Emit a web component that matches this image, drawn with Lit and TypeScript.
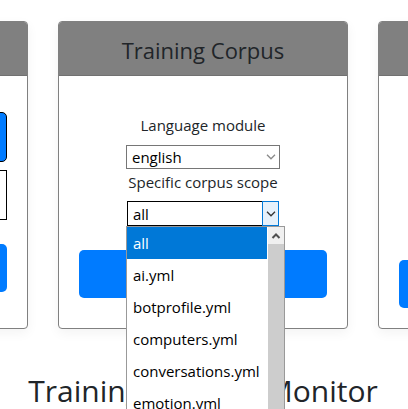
import { LitElement, html, css, svg } from "lit";
import { customElement, property, state } from "lit/decorators.js";
import { classMap } from "lit/directives/class-map.js";

const chevron = (up = false) => html`<svg class="chevron" width="10" height="6" viewBox="0 0 10 6" fill="none" stroke="currentColor" aria-hidden="true">
  ${up ? svg`<path stroke-width="2" d="M1.5 5 L5 1.5 L8.5 5"/>` : svg`<path stroke-width="1.3" d="M1 0.8 L5 4.8 L9 0.8"/>`}
</svg>`;

@customElement("deck-card")
export class DeckCard extends LitElement {
  @property() heading = "";

  static styles = css`
    :host {
      display: flex;
      flex-direction: column;
      box-sizing: border-box;
      border: 1px solid #808080;
      border-radius: 4px;
      background: #fff;
      box-shadow: 0 4px 12px rgba(0, 0, 0, 0.05);
    }
    .header {
      padding: 14px 20px 10px;
      background: #808080;
      border-bottom: 1px solid #717171;
      border-radius: 3px 3px 0 0;
      text-align: center;
    }
    .title {
      margin: 0;
      min-height: 29px;
      font-size: 22px;
      line-height: 29px;
      font-weight: 400;
      white-space: nowrap;
    }
    .body {
      flex: 1;
      display: flex;
      flex-direction: column;
      padding: 20px;
    }
  `;

  render() {
    return html`
      <div class="header"><h4 class="title">${this.heading}</h4></div>
      <div class="body"><slot></slot></div>
    `;
  }
}

@customElement("app-root")
export class AppRoot extends LitElement {
  @state() private language = "english";
  @state() private scope = "all";

  private readonly scopes = [
    "all",
    "ai.yml",
    "botprofile.yml",
    "computers.yml",
    "conversations.yml",
    "emotion.yml",
  ];

  static styles = css`
    :host {
      display: block;
      box-sizing: border-box;
      height: 100vh;
      overflow: hidden;
      padding: 21px 2px 0 0;
      background: #fff;
      color: #212529;
      font-family: "Open Sans", "Noto Sans", sans-serif;
      font-size: 15px;
      line-height: 24px;
    }
    .deck {
      display: grid;
      grid-template-columns: repeat(3, calc(100% - 116px));
      justify-content: center;
      gap: 30px;
    }
    .btn {
      display: block;
      box-sizing: border-box;
      width: 100%;
      height: 48px;
      padding: 0;
      border: 0;
      border-radius: 5px;
      background: #007bff;
      color: #fff;
      font: inherit;
    }
    .outlined,
    .entry {
      height: 50px;
      border: 1px solid #000;
    }
    .entry {
      display: block;
      box-sizing: border-box;
      width: 100%;
      padding: 0 12px;
      background: #fff;
      font: inherit;
    }
    .upload {
      display: grid;
      gap: 8px;
      padding: 16px 0 24px;
    }
    .train {
      margin-bottom: 10px;
    }
    .start {
      margin-top: auto;
    }
    .fields {
      display: flex;
      flex-direction: column;
      align-items: center;
      padding: 17px 0 24px;
    }
    .label {
      white-space: nowrap;
    }
    .picker {
      position: relative;
      display: flex;
      width: 154px;
      margin: 8px 0 1px;
    }
    .select {
      box-sizing: border-box;
      width: 100%;
      height: 24px;
      padding: 0 20px 0 5px;
      border: 1px solid #767676;
      border-radius: 0;
      appearance: none;
      outline: none;
      background: #fff;
      color: #000;
      font: inherit;
      line-height: 22px;
    }
    .arrow {
      position: absolute;
      box-sizing: border-box;
      inset: 0 0 0 auto;
      width: 18px;
      display: grid;
      place-items: center;
      color: #8a8a8a;
      pointer-events: none;
    }
    .picker.open {
      width: 152px;
      margin: 7px 0 0;
    }
    .open .select {
      height: 25px;
      border-color: #000;
    }
    .open .arrow {
      width: 17px;
      border: 1px solid #0078d7;
      background: #e5f1fb;
      color: #333;
    }
    .chevron {
      display: block;
    }
    .popup {
      position: absolute;
      z-index: 1;
      top: 100%;
      left: -1px;
      box-sizing: border-box;
      width: 159px;
      display: flex;
      border: 1px solid #999;
      background: #fff;
      color: #000;
    }
    .options {
      flex: 1;
      margin: 0;
      padding: 0 1px 0 0;
      list-style: none;
    }
    .option {
      padding: 0 6px;
      line-height: 32px;
      white-space: nowrap;
    }
    .option.current {
      background: #0078d7;
      color: #fff;
    }
    .scrollbar {
      width: 16px;
      display: flex;
      flex-direction: column;
      background: #cdcdcd;
    }
    .scroll-up {
      height: 17px;
      padding: 0;
      border: 0;
      display: grid;
      place-items: center;
      background: #f0f0f0;
      color: #505050;
    }
    .monitor {
      margin: 43px 0 0;
      font-size: 30px;
      line-height: 38px;
      font-weight: 400;
      text-align: center;
      white-space: nowrap;
    }
  `;

  render() {
    return html`
      <div class="deck">
        <deck-card>
          <div class="upload">
            <button class="btn outlined" type="button" aria-label="Choose file"></button>
            <input class="entry" type="text" aria-label="File name" />
          </div>
          <button class="btn" type="button" aria-label="Upload"></button>
        </deck-card>

        <deck-card heading="Training Corpus">
          <div class="fields">
            <label class="label" for="language">Language module</label>
            <div class="picker">
              <select
                id="language"
                class="select"
                @change=${(e: Event) => (this.language = (e.target as HTMLSelectElement).value)}
              >
                <option ?selected=${this.language === "english"}>english</option>
              </select>
              <span class="arrow">${chevron()}</span>
            </div>
            <label class="label" for="scope">Specific corpus scope</label>
            <div class="picker open">
              <select
                id="scope"
                class="select"
                @change=${(e: Event) => (this.scope = (e.target as HTMLSelectElement).value)}
              >
                ${this.scopes.map((s) => html`<option ?selected=${s === this.scope}>${s}</option>`)}
              </select>
              <span class="arrow">${chevron()}</span>
              <div class="popup">
                <ul class="options" role="listbox" aria-label="Specific corpus scope">
                  ${this.scopes.map(
                    (s) => html`<li
                      role="option"
                      aria-selected=${s === this.scope}
                      class=${classMap({ option: true, current: s === this.scope })}
                      @click=${() => (this.scope = s)}
                    >${s}</li>`
                  )}
                </ul>
                <div class="scrollbar">
                  <button class="scroll-up" type="button" aria-label="Scroll up">${chevron(true)}</button>
                </div>
              </div>
            </div>
          </div>
          <button class="btn train" type="button" aria-label="Train"></button>
        </deck-card>

        <deck-card>
          <button class="btn start" type="button" aria-label="Start"></button>
        </deck-card>
      </div>
      <h2 class="monitor">Training Process Monitor</h2>
    `;
  }
}
